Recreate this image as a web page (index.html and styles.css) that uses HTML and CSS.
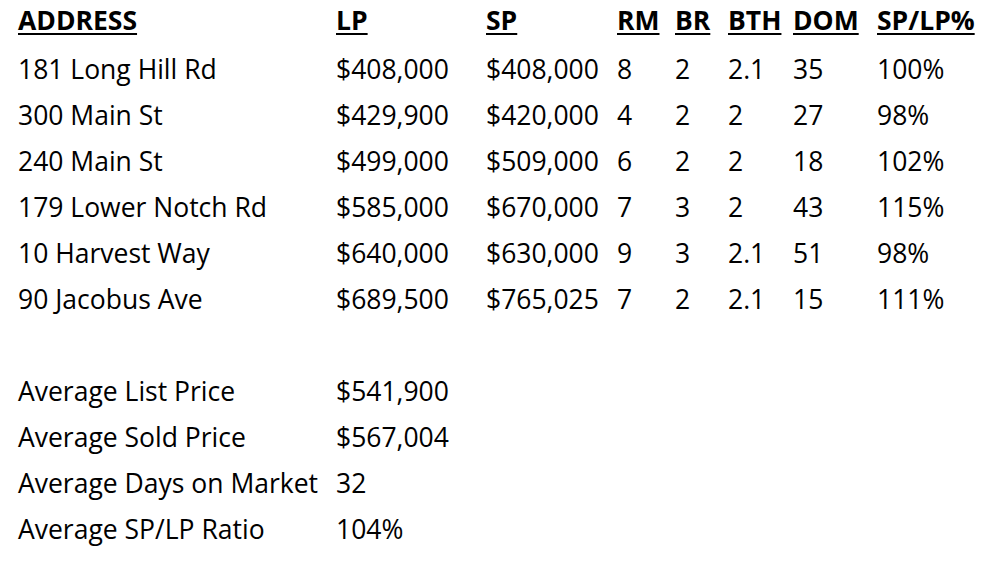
FILE: index.html
```html
<!DOCTYPE html>
<html>
<head>
<meta charset="utf-8">
<link rel="stylesheet" href="styles.css">
</head>
<body>
<div class="sheet">
  <div class="row head">
    <span>ADDRESS</span><span>LP</span><span>SP</span><span>RM</span><span>BR</span><span>BTH</span><span>DOM</span><span>SP/LP%</span>
  </div>
  <div class="row"><span>181 Long Hill Rd</span><span>$408,000</span><span>$408,000</span><span>8</span><span>2</span><span>2.1</span><span>35</span><span>100%</span></div>
  <div class="row"><span>300 Main St</span><span>$429,900</span><span>$420,000</span><span>4</span><span>2</span><span>2</span><span>27</span><span>98%</span></div>
  <div class="row"><span>240 Main St</span><span>$499,000</span><span>$509,000</span><span>6</span><span>2</span><span>2</span><span>18</span><span>102%</span></div>
  <div class="row"><span>179 Lower Notch Rd</span><span>$585,000</span><span>$670,000</span><span>7</span><span>3</span><span>2</span><span>43</span><span>115%</span></div>
  <div class="row"><span>10 Harvest Way</span><span>$640,000</span><span>$630,000</span><span>9</span><span>3</span><span>2.1</span><span>51</span><span>98%</span></div>
  <div class="row"><span>90 Jacobus Ave</span><span>$689,500</span><span>$765,025</span><span>7</span><span>2</span><span>2.1</span><span>15</span><span>111%</span></div>
  <div class="summary">
    <div class="row"><span>Average List Price</span><span>$541,900</span></div>
    <div class="row"><span>Average Sold Price</span><span>$567,004</span></div>
    <div class="row"><span>Average Days on Market</span><span>32</span></div>
    <div class="row"><span>Average SP/LP Ratio</span><span>104%</span></div>
  </div>
</div>
</body>
</html>
```
FILE: styles.css
```css
html, body {
  margin: 0;
  padding: 0;
  background: #fff;
}
body {
  font-family: "Open Sans", sans-serif;
  font-size: 26.5px;
  color: #000;
}
.sheet {
  padding: 0 0 0 18px;
}
.row {
  display: grid;
  grid-template-columns: 318px 150px 131px 58px 53px 65px 84px auto;
  line-height: 46px;
  white-space: nowrap;
}
.head {
  font-weight: bold;
  text-decoration: underline;
  text-decoration-thickness: 2px;
  text-underline-offset: 3px;
  line-height: 40px;
  margin-bottom: 6px;
}
.summary {
  margin-top: 46px;
}
```
